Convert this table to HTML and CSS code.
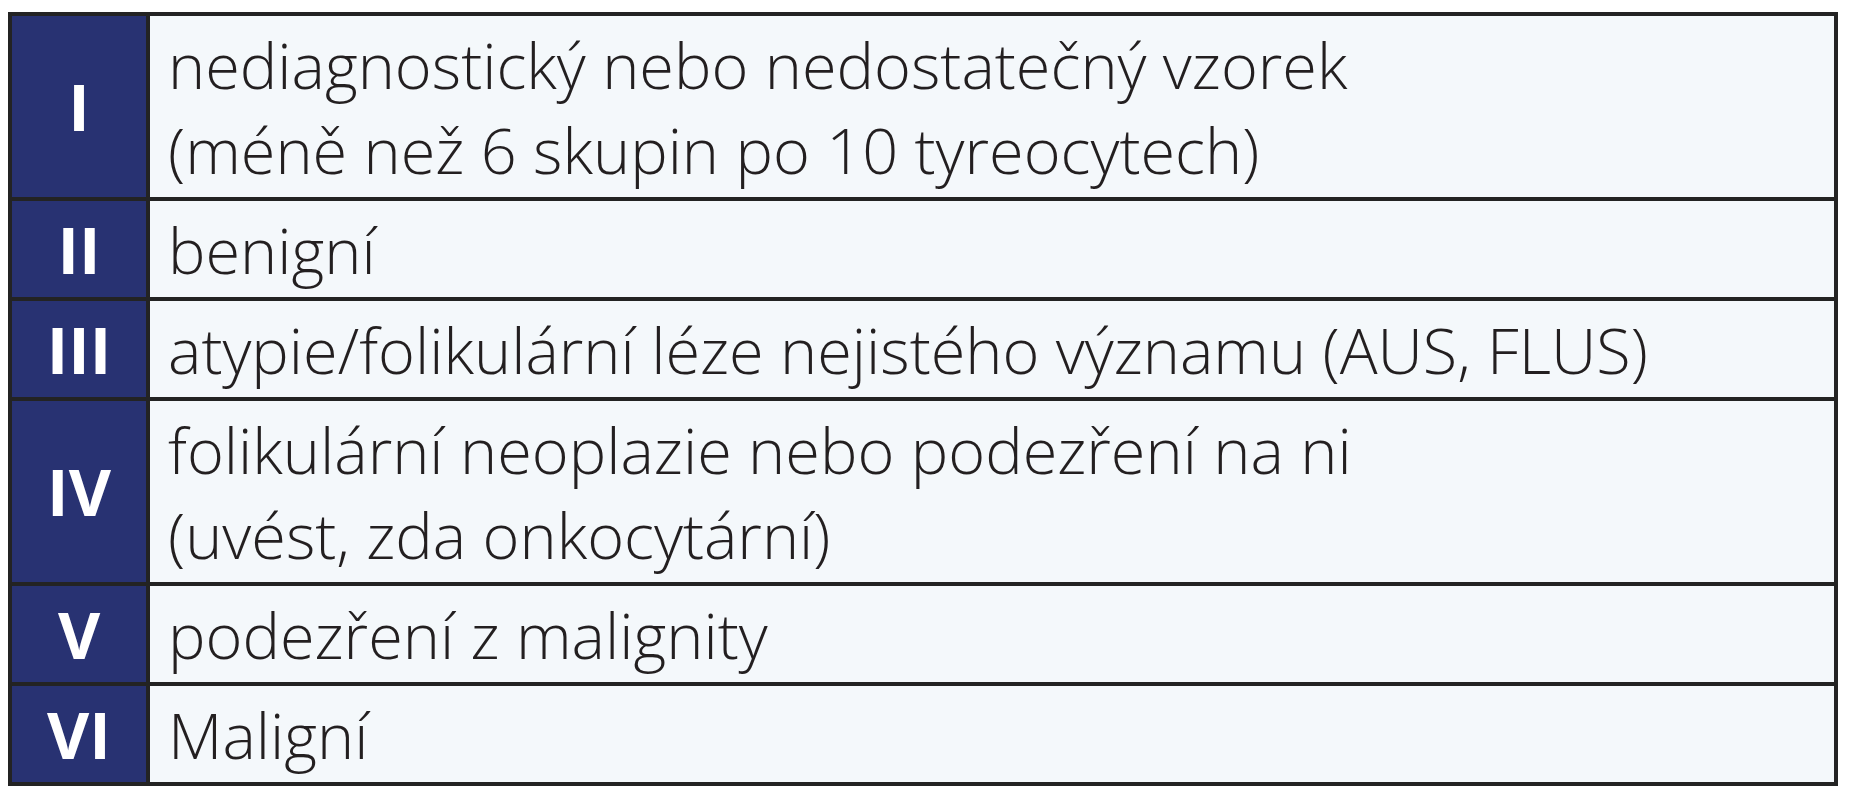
FILE: index.html
```html
<!DOCTYPE html>
<html lang="cs">
<head>
<meta charset="utf-8">
<title>Bethesda</title>
<link rel="stylesheet" href="styles.css">
</head>
<body>
<div class="grid">
  <div class="num">I</div>
  <div class="desc">nediagnostický nebo nedostatečný vzorek<br>(méně než 6 skupin po 10 tyreocytech)</div>
  <div class="num">II</div>
  <div class="desc">benigní</div>
  <div class="num">III</div>
  <div class="desc">atypie/folikulární léze nejistého významu (AUS, FLUS)</div>
  <div class="num">IV</div>
  <div class="desc">folikulární neoplazie nebo podezření na ni<br>(uvést, zda onkocytární)</div>
  <div class="num">V</div>
  <div class="desc">podezření z malignity</div>
  <div class="num">VI</div>
  <div class="desc">Maligní</div>
</div>
</body>
</html>
```

FILE: styles.css
```css
html, body {
  margin: 0;
  padding: 0;
  background: #ffffff;
}
body {
  padding: 12px 0 0 8px;
}
.grid {
  width: 1830px;
  box-sizing: border-box;
  display: grid;
  grid-template-columns: 134px 1fr;
  gap: 4px;
  padding: 4px;
  background: #232323;
  font-family: "Open Sans", "Liberation Sans", sans-serif;
}
.num {
  background: #283272;
  color: #ffffff;
  font-weight: 700;
  font-stretch: 90%;
  font-size: 65px;
  line-height: 85px;
  display: flex;
  align-items: center;
  justify-content: center;
}
.desc {
  background: #f4f8fb;
  color: #231f20;
  font-weight: 300;
  font-stretch: 100%;
  font-size: 63px;
  line-height: 85px;
  white-space: nowrap;
  padding: 5.5px 18px;
}
```
